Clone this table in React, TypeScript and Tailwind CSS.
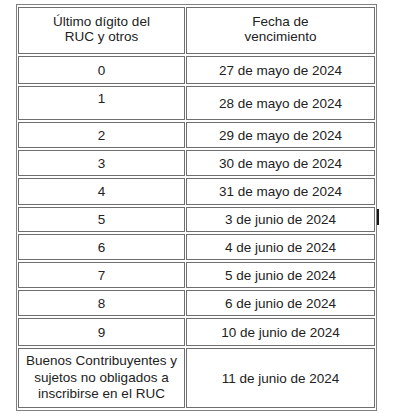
const rows = [
  { digit: "0", date: "27 de mayo de 2024", h: "h-[28px]" },
  { digit: "1", date: "28 de mayo de 2024", h: "h-[34px]", lift: true },
  { digit: "2", date: "29 de mayo de 2024", h: "h-[26px]" },
  { digit: "3", date: "30 de mayo de 2024", h: "h-[26px]" },
  { digit: "4", date: "31 de mayo de 2024", h: "h-[27px]" },
  { digit: "5", date: "3 de junio de 2024", h: "h-[25px]" },
  { digit: "6", date: "4 de junio de 2024", h: "h-[26px]" },
  { digit: "7", date: "5 de junio de 2024", h: "h-[26px]" },
  { digit: "8", date: "6 de junio de 2024", h: "h-[26px]" },
  { digit: "9", date: "10 de junio de 2024", h: "h-[28px]" },
];

const cell = "border border-[#6f6f6f] p-0 text-center align-middle";

export default function App() {
  return (
    <div className="relative min-h-[420px] w-[404px] bg-white pl-[16px] pt-[4px] font-['Liberation_Sans',Arial,sans-serif] text-[13.5px] leading-[15px] text-[#222]">
      <table className="w-[361px] table-fixed border-separate border-spacing-x-[1px] border-spacing-y-[2px] border border-[#808080]">
        <colgroup>
          <col className="w-[167px]" />
          <col className="w-[189px]" />
        </colgroup>
        <thead>
          <tr className="h-[47px]">
            <th className={`${cell} pb-[4px] font-normal`}>
              Último dígito del
              <br />
              RUC y otros
            </th>
            <th className={`${cell} pb-[4px] font-normal`}>
              Fecha de
              <br />
              vencimiento
            </th>
          </tr>
        </thead>
        <tbody>
          {rows.map((r) => (
            <tr key={r.digit} className={r.h}>
              <td className={`${cell} ${r.lift ? "pb-[9px]" : ""}`}>{r.digit}</td>
              <td className={cell}>{r.date}</td>
            </tr>
          ))}
          <tr className="h-[60px]">
            <td className={`${cell} leading-[16.5px]`}>
              Buenos Contribuyentes y
              <br />
              sujetos no obligados a
              <br />
              inscribirse en el RUC
            </td>
            <td className={cell}>11 de junio de 2024</td>
          </tr>
        </tbody>
      </table>
      <span className="absolute left-[377px] top-[209px] h-[16px] w-[2px] bg-[#1a1a1a]" />
    </div>
  );
}
